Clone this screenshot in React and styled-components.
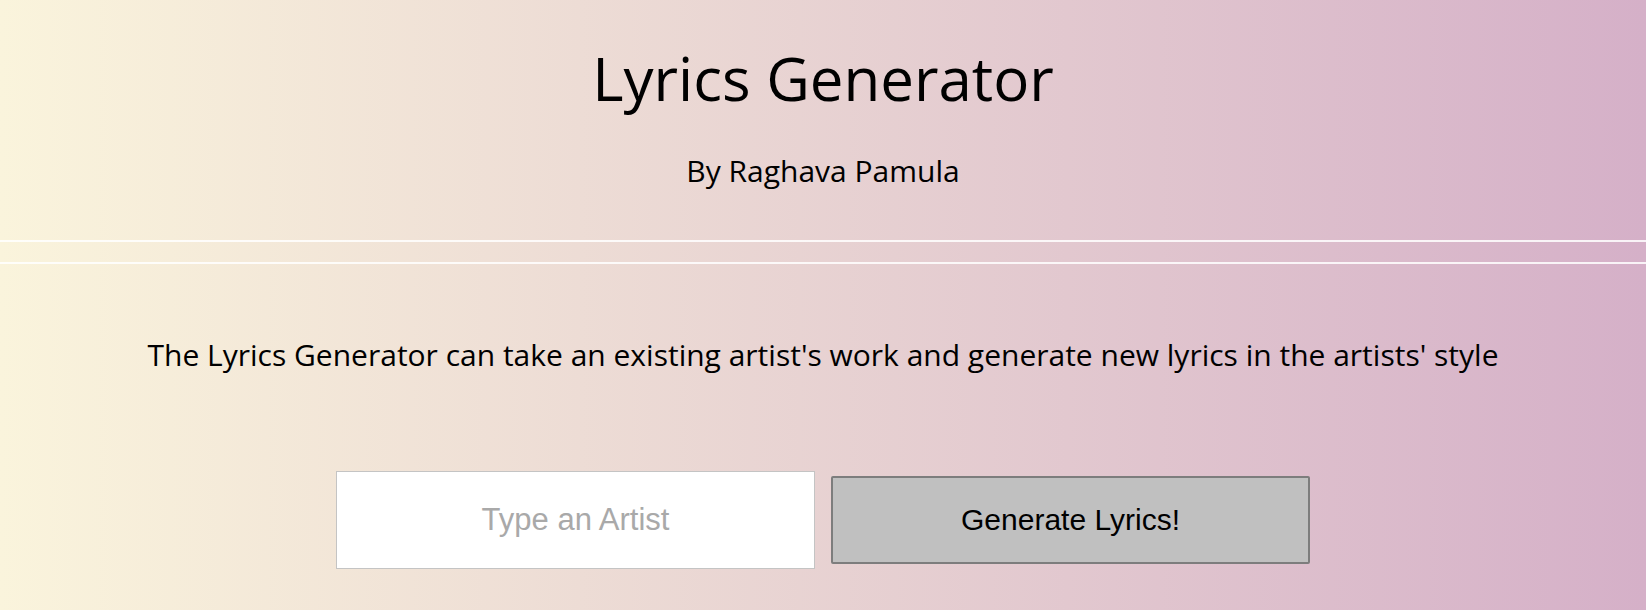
import React from 'react';
import styled, { createGlobalStyle } from 'styled-components';

const GlobalStyle = createGlobalStyle`
  html, body {
    margin: 0;
    padding: 0;
  }
  body {
    min-height: 100vh;
    background: linear-gradient(to right, #faf4dc, #d5b0c8);
    font-family: "Open Sans", "Liberation Sans", sans-serif;
    color: #000;
  }
`

const Page = styled.div`
  min-height: 100vh;
  display: flex;
  flex-direction: column;
`

const Header = styled.header`
  display: flex;
  flex-direction: column;
  align-items: center;
  padding-top: 37px;
  padding-bottom: 49px;
  border-bottom: 2px solid rgba(255, 255, 255, 0.85);
`

const Title = styled.h1`
  margin: 0;
  font-size: 60px;
  font-weight: 400;
  line-height: 82px;
`

const Byline = styled.h3`
  margin: 31px 0 0;
  font-size: 30px;
  font-weight: 400;
  line-height: 41px;
`

const Divider = styled.hr`
  margin: 20px 0 0;
  border: 0;
  height: 2px;
  background: rgba(255, 255, 255, 0.85);
`

const Intro = styled.p`
  margin: 70px 0 0;
  text-align: center;
  font-size: 30px;
  line-height: 41px;
`

const Form = styled.form`
  display: flex;
  justify-content: center;
  align-items: center;
  gap: 16px;
  margin-top: 96px;
`

const ArtistInput = styled.input`
  box-sizing: border-box;
  width: 479px;
  height: 98px;
  border: 1px solid #c4c4c4;
  background: #fff;
  text-align: center;
  font-family: "Liberation Sans", Arial, sans-serif;
  font-size: 31px;
  outline: none;

  &::placeholder {
    color: #a9a9a9;
  }
`

const GenerateButton = styled.button`
  box-sizing: border-box;
  width: 479px;
  height: 88px;
  border: 2px solid #7d7d7d;
  border-radius: 2px;
  background: #c0c0c0;
  color: #000;
  font-family: "Liberation Sans", Arial, sans-serif;
  font-size: 30px;
  cursor: pointer;
`

const App = () => (
  <>
    <GlobalStyle />
    <Page>
      <Header>
        <Title>Lyrics Generator</Title>
        <Byline>By Raghava Pamula</Byline>
      </Header>
      <Divider />
      <Intro>
        The Lyrics Generator can take an existing artist's work and generate new lyrics in the artists' style
      </Intro>
      <Form onSubmit={(e) => e.preventDefault()}>
        <ArtistInput type="text" placeholder="Type an Artist" />
        <GenerateButton type="submit">Generate Lyrics!</GenerateButton>
      </Form>
    </Page>
  </>
);

export default App;
